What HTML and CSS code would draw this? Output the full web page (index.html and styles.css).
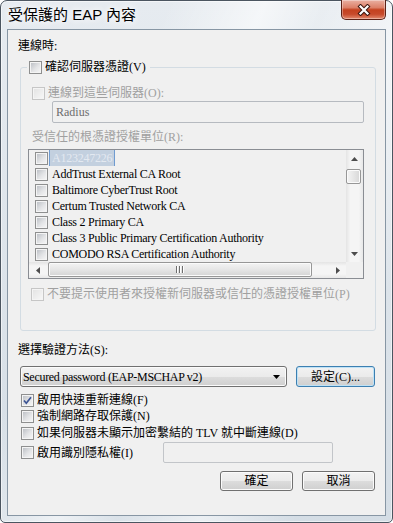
FILE: index.html
```html
<!DOCTYPE html>
<html lang="zh-Hant">
<head>
    <meta charset="UTF-8">
    <meta name="viewport" content="width=device-width, initial-scale=1.0">
    <title>受保護的 EAP 內容</title>
    <link rel="stylesheet" href="styles.css">
</head>
<body>
    <div class="window">
        <div class="titlebar">
            <span class="title">受保護的 EAP 內容</span>
            <div class="close-btn">
                <svg width="14" height="12" viewBox="0 0 14 12">
                    <path d="M3.5 2.5 L10.5 9.5 M10.5 2.5 L3.5 9.5" stroke="#3a1710" stroke-width="4.2" stroke-linecap="square" fill="none"/>
                    <path d="M3.5 2.5 L10.5 9.5 M10.5 2.5 L3.5 9.5" stroke="#ffffff" stroke-width="2.2" stroke-linecap="square" fill="none"/>
                </svg>
            </div>
        </div>

        <div class="client">
            <div class="caption">連線時:</div>

            <fieldset class="group">
                <legend class="group-legend"><span class="cb"></span>確認伺服器憑證(V)</legend>

                <div class="row row-servers disabled"><span class="cb cb-off"></span>連線到這些伺服器(O):</div>
                <div class="textbox server-box">Radius</div>

                <div class="sub-caption disabled">受信任的根憑證授權單位(R):</div>
                <div class="list">
                    <div class="list-items">
                        <div class="list-row"><span class="cb"></span><span class="item-text selected">A123247226</span></div>
                        <div class="list-row"><span class="cb"></span><span class="item-text">AddTrust External CA Root</span></div>
                        <div class="list-row"><span class="cb"></span><span class="item-text">Baltimore CyberTrust Root</span></div>
                        <div class="list-row"><span class="cb"></span><span class="item-text">Certum Trusted Network CA</span></div>
                        <div class="list-row"><span class="cb"></span><span class="item-text">Class 2 Primary CA</span></div>
                        <div class="list-row"><span class="cb"></span><span class="item-text">Class 3 Public Primary Certification Authority</span></div>
                        <div class="list-row"><span class="cb"></span><span class="item-text">COMODO RSA Certification Authority</span></div>
                    </div>

                    <div class="vscroll">
                        <div class="sb-btn">
                            <svg width="7" height="4" viewBox="0 0 7 4"><path d="M0 4 L3.5 0 L7 4 Z" fill="#4d4d4d"/></svg>
                        </div>
                        <div class="sb-track-v"><div class="thumb-v"></div></div>
                        <div class="sb-btn">
                            <svg width="7" height="4" viewBox="0 0 7 4"><path d="M0 0 L7 0 L3.5 4 Z" fill="#4d4d4d"/></svg>
                        </div>
                    </div>

                    <div class="hscroll">
                        <div class="sb-btn-h">
                            <svg width="4" height="7" viewBox="0 0 4 7"><path d="M4 0 L4 7 L0 3.5 Z" fill="#4d4d4d"/></svg>
                        </div>
                        <div class="sb-track-h"><div class="thumb-h"><span class="grip"></span></div></div>
                        <div class="sb-btn-h">
                            <svg width="4" height="7" viewBox="0 0 4 7"><path d="M0 0 L4 3.5 L0 7 Z" fill="#4d4d4d"/></svg>
                        </div>
                    </div>

                    <div class="corner"></div>
                </div>

                <div class="row row-prompt disabled"><span class="cb cb-off"></span>不要提示使用者來授權新伺服器或信任的憑證授權單位(P)</div>
            </fieldset>

            <div class="caption method-caption">選擇驗證方法(S):</div>
            <div class="method-row">
                <div class="combo">
                    <span class="combo-text">Secured password (EAP-MSCHAP v2)</span>
                    <svg width="7" height="4" viewBox="0 0 7 4"><path d="M0 0 L7 0 L3.5 4 Z" fill="#000"/></svg>
                </div>
                <div class="btn btn-focus">設定(C)...</div>
            </div>

            <div class="row check-row first-check">
                <span class="cb">
                    <svg width="11" height="11" viewBox="0 0 11 11"><path d="M2 5.5 L4.3 8.2 L9 2.2" stroke="#3c5494" stroke-width="1.7" fill="none"/></svg>
                </span>啟用快速重新連線(F)
            </div>
            <div class="row check-row"><span class="cb"></span>強制網路存取保護(N)</div>
            <div class="row check-row gap-check"><span class="cb"></span>如果伺服器未顯示加密繫結的 TLV 就中斷連線(D)</div>
            <div class="row check-row identity-row gap-check">
                <span class="identity-label"><span class="cb"></span>啟用識別隱私權(I)</span>
                <div class="textbox identity-box"></div>
            </div>

            <div class="button-row">
                <div class="btn">確定</div>
                <div class="btn">取消</div>
            </div>
        </div>
    </div>
</body>
</html>
```

FILE: styles.css
```css
* {
    box-sizing: border-box;
}

body {
    margin: 0;
    width: 393px;
    height: 523px;
    background: #ffffff;
    color: #000;
    font: 12px/16px "Liberation Serif", "Noto Sans CJK TC", serif;
}

/* Aero frame */
.window {
    width: 393px;
    height: 523px;
    display: flex;
    flex-direction: column;
    padding: 0 6px 6px;
    border: 1px solid #4b5560;
    border-radius: 7px 7px 5px 5px;
    background:
        linear-gradient(112deg, rgba(255,255,255,0) 28%, rgba(255,255,255,.6) 44%, rgba(255,255,255,.15) 54%, rgba(255,255,255,.55) 68%, rgba(255,255,255,0) 84%),
        linear-gradient(#e6ebf0, #d4dde5);
    box-shadow: inset 0 0 0 1px rgba(255,255,255,.55);
}

.titlebar {
    height: 28px;
    display: flex;
    justify-content: space-between;
    align-items: flex-start;
}

.title {
    margin: 5px 0 0 1px;
    font: 15px/18px "Liberation Sans", "Noto Sans CJK TC", sans-serif;
    color: #000;
    text-shadow: 0 0 6px #fff, 0 0 10px #fff;
}

.close-btn {
    width: 45px;
    height: 20px;
    margin-top: -1px;
    display: flex;
    align-items: center;
    justify-content: center;
    border: 1px solid #5b2116;
    border-top: none;
    border-radius: 0 0 5px 5px;
    background: linear-gradient(#eab0a2, #dc8068 40%, #c4411f 52%, #c74a2b 75%, #e38a6f);
    box-shadow: inset 0 0 0 1px rgba(255,255,255,.35);
}

.client {
    flex: 1;
    border: 1px solid #8796a4;
    background: #f0f0f0;
}

.caption {
    margin-top: 8px;
    padding-left: 10px;
}

.disabled {
    color: #a0a0a0;
}

/* checkboxes */
.cb {
    flex: none;
    position: relative;
    width: 13px;
    height: 13px;
    margin-right: 3px;
    border: 1px solid #8e8f8f;
    background: linear-gradient(135deg, #b7bbc1, #e3e4e6 55%, #f8f8f8);
    box-shadow: inset 0 0 0 1px #f4f4f4;
}

.cb svg {
    display: block;
}

.cb-off {
    border-color: #c6c6c6;
    background: linear-gradient(135deg, #e2e2e2, #f8f8f8);
}

.row {
    display: flex;
    align-items: center;
    height: 16px;
}

/* group box */
.group {
    margin: 5px 9px 0 12px;
    padding: 0 0 28px;
    min-width: 0;
    border: 1px solid #d3dce3;
    border-radius: 3px;
}

.group-legend {
    display: flex;
    align-items: center;
    height: 16px;
    margin-left: 6px;
    padding: 0 4px 0 2px;
}

.row-servers {
    margin-top: 10px;
    padding-left: 11px;
}

.textbox {
    height: 22px;
    border: 1px solid #b6bac0;
    border-radius: 2px;
    background: #f0f0f0;
}

.server-box {
    margin: 0 11px 0 31px;
    padding-left: 3px;
    line-height: 20px;
    color: #6d6d6d;
}

.sub-caption {
    margin-top: 6px;
    padding-left: 11px;
}

/* list view */
.list {
    height: 130px;
    margin: 4px 11px 0 7px;
    border: 1px solid #8a8d93;
    display: grid;
    grid-template-columns: 1fr 17px;
    grid-template-rows: 1fr 16px;
    background: #f0f0f0;
}

.list-items {
    overflow: hidden;
}

.list-row {
    display: flex;
    align-items: center;
    height: 16px;
    padding-left: 6px;
    white-space: nowrap;
}

.list-row .cb {
    margin-right: 4px;
}

.item-text {
    letter-spacing: -0.25px;
}

.item-text.selected {
    height: 16px;
    margin-left: -3px;
    padding: 0 2px;
    border-left: 1px solid #6f9bd0;
    border-right: 1px solid #6f9bd0;
    background: #c3d0df;
    color: #e3e9f1;
}

.vscroll {
    display: flex;
    flex-direction: column;
    background: linear-gradient(90deg, #e4e4e4, #f5f5f5 25%, #f5f5f5 75%, #e8e8e8);
}

.sb-btn {
    height: 17px;
    display: flex;
    align-items: center;
    justify-content: center;
}

.sb-track-v {
    flex: 1;
    padding-top: 2px;
}

.thumb-v {
    width: 15px;
    height: 15px;
    margin-left: 0;
    border: 1px solid #979797;
    border-radius: 2px;
    background: linear-gradient(90deg, #f4f4f4, #e6e6e6 50%, #d7d7d7);
    box-shadow: inset 0 0 0 1px #fbfbfb;
}

.hscroll {
    display: flex;
    background: linear-gradient(#e4e4e4, #f5f5f5 25%, #f5f5f5 75%, #e8e8e8);
}

.sb-btn-h {
    width: 17px;
    display: flex;
    align-items: center;
    justify-content: center;
}

.sb-track-h {
    flex: 1;
    padding-left: 2px;
}

.thumb-h {
    width: 264px;
    height: 15px;
    display: flex;
    align-items: center;
    justify-content: center;
    border: 1px solid #979797;
    border-radius: 2px;
    background: linear-gradient(#f4f4f4, #e6e6e6 50%, #d4d4d4);
    box-shadow: inset 0 0 0 1px #fbfbfb;
}

.grip {
    width: 8px;
    height: 7px;
    background: linear-gradient(90deg,
        #6e6e6e 0 1px, #ffffff 1px 2px, transparent 2px 3px,
        #6e6e6e 3px 4px, #ffffff 4px 5px, transparent 5px 6px,
        #6e6e6e 6px 7px, #ffffff 7px 8px);
}

.corner {
    background: #f0f0f0;
}

.row-prompt {
    margin-top: 7px;
    padding-left: 10px;
}

/* authentication method */
.method-caption {
    margin-top: 11px;
}

.method-row {
    display: flex;
    gap: 9px;
    margin: 8px 10px 0 12px;
}

.combo {
    flex: 1;
    height: 21px;
    display: flex;
    align-items: center;
    justify-content: space-between;
    padding: 0 6px 0 2px;
    border: 1px solid #707070;
    border-radius: 3px;
    background: linear-gradient(#f2f2f2, #ebebeb 50%, #dddddd 50%, #cfcfcf);
    box-shadow: inset 0 0 0 1px #fbfbfb;
}

.combo-text {
    letter-spacing: -0.3px;
}

.btn {
    width: 73px;
    height: 20px;
    display: flex;
    align-items: center;
    justify-content: center;
    border: 1px solid #707070;
    border-radius: 3px;
    background: linear-gradient(#f2f2f2, #ebebeb 50%, #dddddd 50%, #cfcfcf);
    box-shadow: inset 0 0 0 1px #fbfbfb;
}

.btn-focus {
    width: 79px;
    height: 21px;
    border-color: #3c7fb1;
    box-shadow: inset 0 0 0 1px #bfe2f6;
}

.check-row {
    padding-left: 13px;
}

.first-check {
    margin-top: 5px;
}

.gap-check {
    margin-top: 1px;
}

.identity-row {
    height: 21px;
}

.identity-label {
    width: 142px;
    display: flex;
    align-items: center;
}

.identity-box {
    width: 170px;
    height: 21px;
    border-color: #c2c5c9;
}

.button-row {
    display: flex;
    justify-content: flex-end;
    gap: 9px;
    margin: 8px 10px 0 0;
}
```
